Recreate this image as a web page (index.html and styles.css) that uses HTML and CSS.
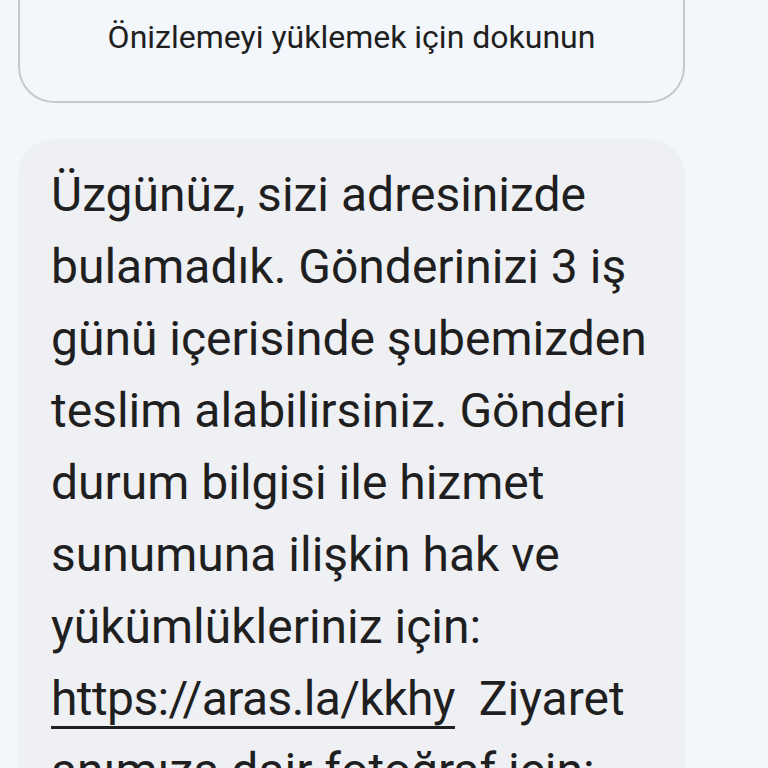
FILE: index.html
```html
<!DOCTYPE html>
<html lang="tr">
<head>
<meta charset="utf-8">
<link rel="stylesheet" href="styles.css">
</head>
<body>
<main class="thread">
  <div class="preview-card">
    <span class="preview-text">Önizlemeyi yüklemek için dokunun</span>
  </div>
  <div class="bubble">
    <p class="message">Üzgünüz, sizi adresinizde<br>bulamadık. Gönderinizi 3 iş<br>günü içerisinde şubemizden<br>teslim alabilirsiniz. Gönderi<br>durum bilgisi ile hizmet<br>sunumuna ilişkin hak ve<br>yükümlükleriniz için:<br><a class="link" href="#">https://aras.la/kkhy</a>&nbsp; Ziyaret<br>anımıza dair fotoğraf için:</p>
  </div>
</main>
</body>
</html>
```
FILE: styles.css
```css
html, body {
  margin: 0;
  padding: 0;
  background: #f3f7fb;
  height: 768px;
  overflow: hidden;
}

.thread {
  display: flex;
  flex-direction: column;
  padding: 0 83px 0 18px;
  gap: 36px;
}

.preview-card {
  height: 103px;
  box-sizing: border-box;
  border: 2px solid #c5c8cc;
  border-top: 0;
  border-radius: 0 0 36px 36px;
  display: flex;
  justify-content: center;
  padding-top: 16px;
}

.preview-text {
  font-family: Roboto, "Noto Sans", sans-serif;
  font-size: 32px;
  line-height: 42px;
  color: #1f1f1f;
}

.bubble {
  background: #eff0f4;
  border-radius: 36px;
  padding: 20px 20px 20px 33px;
}

.message {
  margin: 0;
  font-family: Roboto, "Noto Sans", sans-serif;
  font-size: 48px;
  line-height: 72px;
  color: #1f1f1f;
  white-space: nowrap;
}

.link {
  color: #1f1f1f;
  letter-spacing: -0.6px;
  text-decoration: underline;
  text-decoration-thickness: 3px;
  text-underline-offset: 11px;
}
```
